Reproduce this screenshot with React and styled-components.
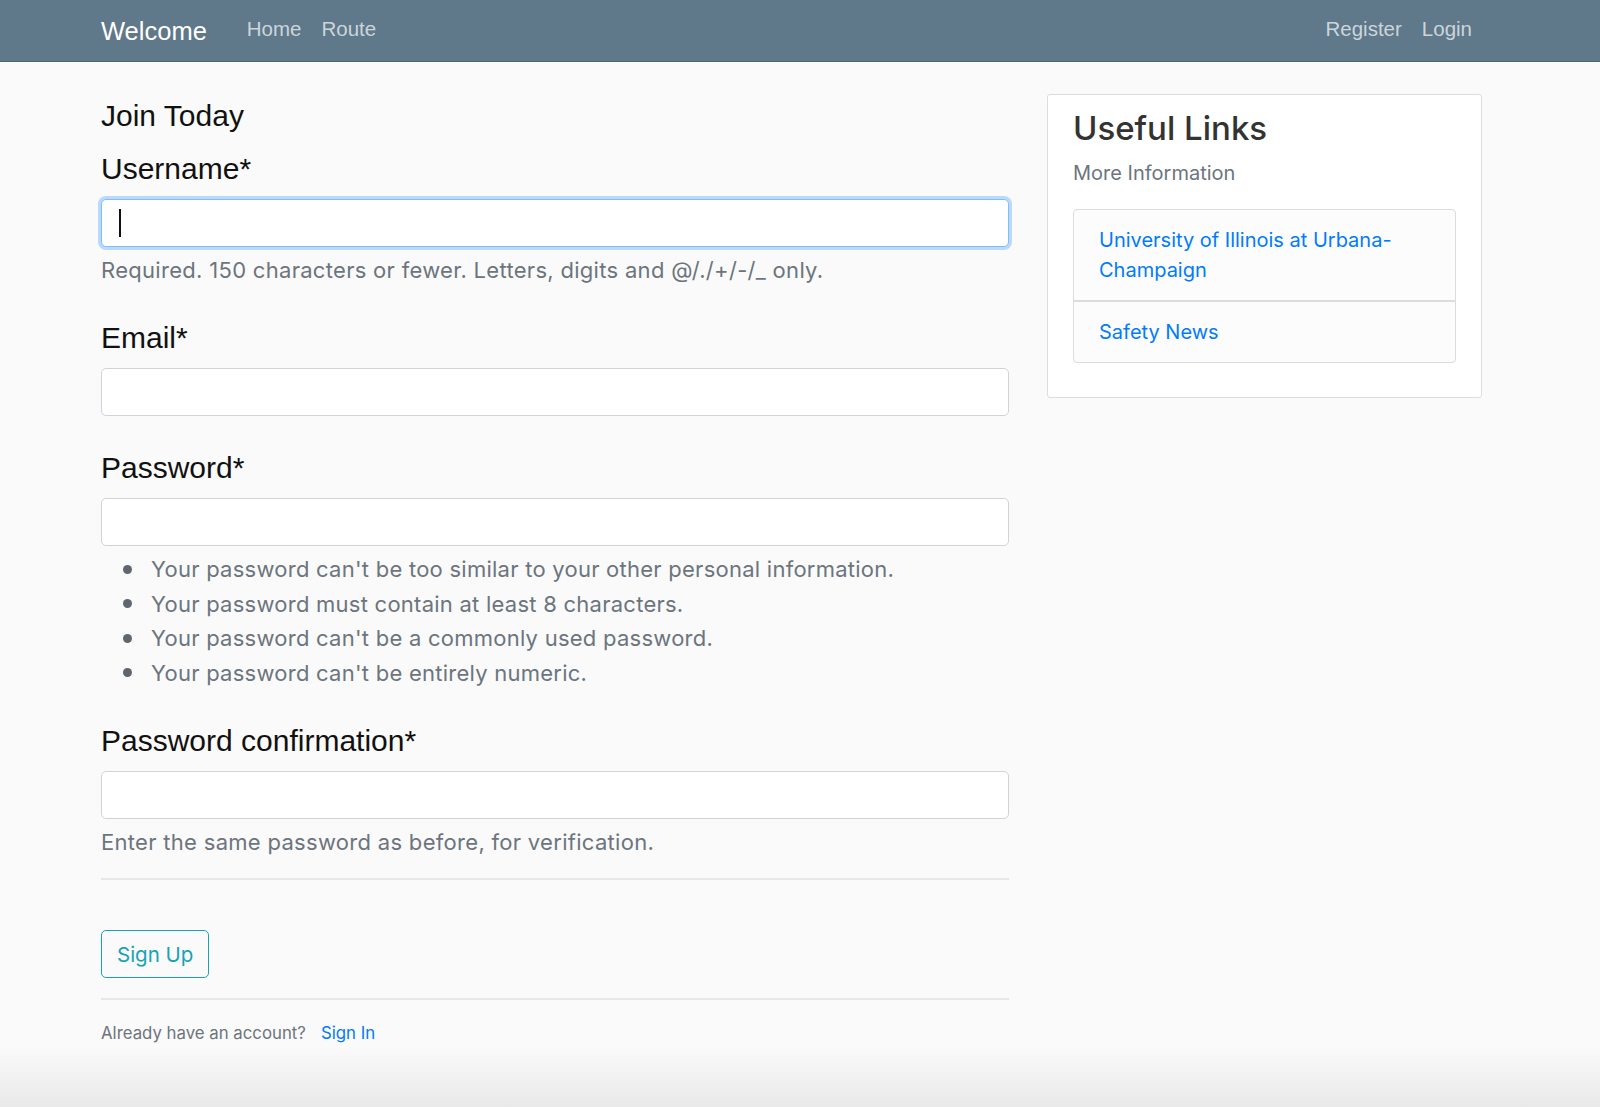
import React from "react";
import styled, { createGlobalStyle } from "styled-components";

const GlobalStyle = createGlobalStyle`
  html, body {
    margin: 0;
    padding: 0;
  }
  body {
    min-height: 100vh;
    background: linear-gradient(to bottom, #fafafa 0, #fafafa calc(100% - 60px), #e9e9e9 100%);
    font-family: Inter, "Noto Sans", sans-serif;
    color: #212529;
  }
  #root {
    min-height: 100vh;
  }
`;

const Navbar = styled.header`
  height: 61px;
  background-color: #5f788a;
  border-bottom: 1px solid #4a667c;
`;

const NavInner = styled.nav`
  width: 1381px;
  margin-left: 101px;
  height: 100%;
  display: flex;
  align-items: center;
  font-family: "Liberation Sans", Arial, sans-serif;
`;

const Brand = styled.a`
  color: #fff;
  font-size: 25.5px;
  margin-right: 30px;
  margin-top: 2px;
  text-decoration: none;
`;

const NavLink = styled.a`
  color: #cbd5db;
  font-size: 20.5px;
  padding: 0 10px;
  text-decoration: none;
`;

const NavGroup = styled.div`
  display: flex;
  align-items: center;
  margin-left: ${(p) => (p.right ? "auto" : "0")};
  margin-top: -3px;
`;

const Main = styled.main`
  width: 1381px;
  margin-left: 101px;
  padding-top: 32px;
  display: grid;
  grid-template-columns: 908px 435px;
  column-gap: 38px;
  align-items: start;
`;

const FormColumn = styled.div`
  padding-top: 4px;
`;

const Legend = styled.h2`
  font-family: "Liberation Sans", Arial, sans-serif;
  font-weight: 400;
  font-size: 30px;
  line-height: 36px;
  margin: 0 0 17px;
  color: #111;
`;

const FormGroup = styled.div`
  margin-bottom: ${(p) => p.gap || "34px"};
`;

const Label = styled.label`
  display: block;
  font-family: "Liberation Sans", Arial, sans-serif;
  font-size: 30px;
  line-height: 36px;
  color: #111;
  margin-bottom: 12px;
`;

const Input = styled.div`
  box-sizing: border-box;
  height: 48px;
  background: #fff;
  border: 1px solid ${(p) => (p.focus ? "#80bdff" : "#ced4da")};
  border-radius: 5px;
  box-shadow: ${(p) => (p.focus ? "0 0 0 3px rgba(0, 123, 255, 0.25)" : "none")};
  display: flex;
  align-items: center;
  padding-left: 17px;
`;

const Caret = styled.span`
  width: 2px;
  height: 28px;
  background: #111;
`;

const Help = styled.div`
  font-size: 22px;
  letter-spacing: 0.3px;
  line-height: 30px;
  color: #6c757d;
  margin-top: 8px;
`;

const Rules = styled.ul`
  margin: 6px 0 0;
  padding-left: 50px;
  list-style: none;
  color: #6c757d;
  font-size: 22px;
  letter-spacing: 0.25px;
  line-height: 34.6px;
  li::before {
    content: "";
    display: inline-block;
    width: 9px;
    height: 9px;
    border-radius: 50%;
    background: #5f666d;
    margin-left: -28px;
    margin-right: 19px;
    vertical-align: middle;
    position: relative;
    top: -2px;
  }
`;

const Divider = styled.hr`
  border: 0;
  border-top: 2px solid #e5e7e9;
  margin: 0;
`;

const ButtonRow = styled.div`
  padding: 50px 0 20px;
`;

const OutlineButton = styled.button`
  box-sizing: border-box;
  height: 48px;
  padding: 0 15px;
  font-family: Inter, "Noto Sans", sans-serif;
  font-size: 20.5px;
  color: #17a2b8;
  background: transparent;
  border: 1.5px solid #17a2b8;
  border-radius: 5px;
`;

const Footnote = styled.div`
  padding-top: 21px;
  font-size: 16.8px;
  line-height: 24px;
  color: #6c757d;
`;

const Link = styled.a`
  color: #007bff;
  text-decoration: none;
  margin-left: ${(p) => p.ml || "0"};
`;

const Card = styled.aside`
  box-sizing: border-box;
  background: #fff;
  border: 1px solid #dddddd;
  border-radius: 3px;
  padding: 12px 25px 34px;
`;

const CardTitle = styled.h3`
  font-family: Inter, "Noto Sans", sans-serif;
  font-weight: 500;
  font-size: 33px;
  line-height: 42px;
  color: #333;
  margin: 0 0 10px;
`;

const Muted = styled.p`
  margin: 0 0 22px;
  font-size: 20px;
  line-height: 28px;
  color: #6c757d;
`;

const ListGroup = styled.ul`
  list-style: none;
  margin: 0;
  padding: 0;
  border: 1px solid #dcdcdc;
  border-radius: 4px;
  background: #fcfcfd;
`;

const ListItem = styled.li`
  padding: 15px 25px;
  font-size: 20px;
  line-height: 30px;
  & + & {
    border-top: 2px solid #dcdcdc;
  }
`;

const rules = [
  "Your password can't be too similar to your other personal information.",
  "Your password must contain at least 8 characters.",
  "Your password can't be a commonly used password.",
  "Your password can't be entirely numeric.",
];

export default function App() {
  return (
    <>
      <GlobalStyle />
      <Navbar>
        <NavInner>
          <Brand href="#">Welcome</Brand>
          <NavGroup>
            <NavLink href="#">Home</NavLink>
            <NavLink href="#">Route</NavLink>
          </NavGroup>
          <NavGroup right>
            <NavLink href="#">Register</NavLink>
            <NavLink href="#">Login</NavLink>
          </NavGroup>
        </NavInner>
      </Navbar>
      <Main>
        <FormColumn>
          <Legend>Join Today</Legend>
          <FormGroup gap="35px">
            <Label>Username*</Label>
            <Input focus>
              <Caret />
            </Input>
            <Help>Required. 150 characters or fewer. Letters, digits and @/./+/-/_ only.</Help>
          </FormGroup>
          <FormGroup gap="34px">
            <Label>Email*</Label>
            <Input />
          </FormGroup>
          <FormGroup gap="33px">
            <Label>Password*</Label>
            <Input />
            <Rules>
              {rules.map((r) => (
                <li key={r}>{r}</li>
              ))}
            </Rules>
          </FormGroup>
          <FormGroup gap="21px">
            <Label>Password confirmation*</Label>
            <Input />
            <Help>Enter the same password as before, for verification.</Help>
          </FormGroup>
          <Divider />
          <ButtonRow>
            <OutlineButton>Sign Up</OutlineButton>
          </ButtonRow>
          <Divider />
          <Footnote>
            Already have an account?
            <Link href="#" ml="15px">Sign In</Link>
          </Footnote>
        </FormColumn>
        <Card>
          <CardTitle>Useful Links</CardTitle>
          <Muted>More Information</Muted>
          <ListGroup>
            <ListItem>
              <Link href="#">University of Illinois at Urbana-<br />Champaign</Link>
            </ListItem>
            <ListItem>
              <Link href="#">Safety News</Link>
            </ListItem>
          </ListGroup>
        </Card>
      </Main>
    </>
  );
}
